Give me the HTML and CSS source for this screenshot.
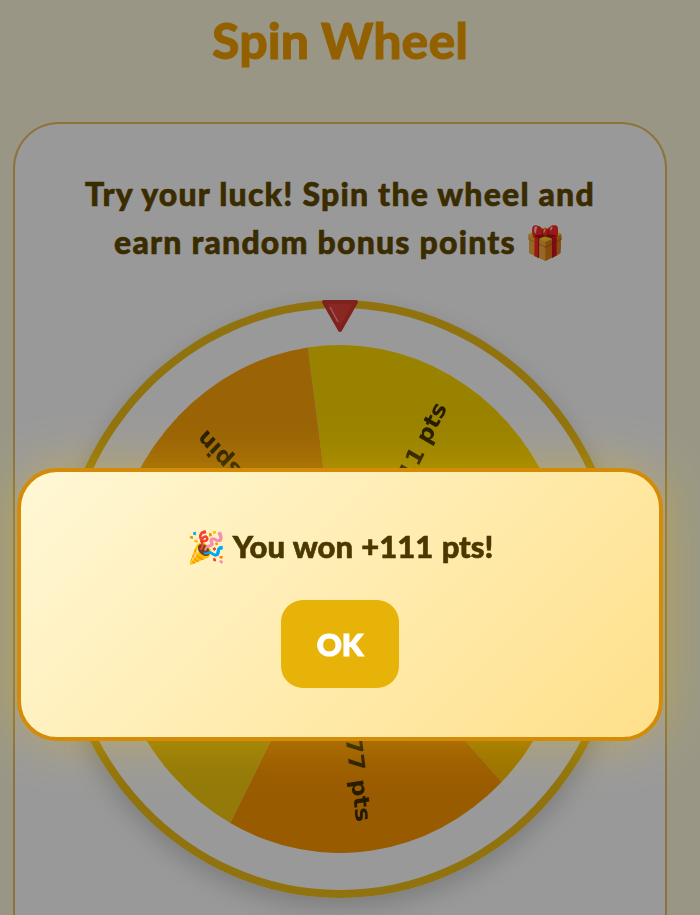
FILE: index.html
```html
<!DOCTYPE html>
<html lang="en">
<head>
    <meta charset="UTF-8">
    <meta name="viewport" content="width=device-width, initial-scale=1.0">
    <title>Spin Wheel</title>
    <link rel="stylesheet" href="styles.css">
</head>
<body>
    <div class="page">
        <h1 class="title">Spin Wheel</h1>
        <div class="card">
            <p class="intro">Try your luck! Spin the wheel and<br>earn random bonus points 🎁</p>
            <div class="wheel">
                <svg class="pointer" width="40" height="36" viewBox="0 0 40 36">
                    <polygon points="4,4 36,4 20,32" fill="#e8423a" stroke="#d43a32" stroke-width="4" stroke-linejoin="round"/>
                    <line x1="10" y1="9" x2="18" y2="24" stroke="#ff9d98" stroke-width="1.5"/>
                </svg>
                <svg class="disk" width="466" height="508" viewBox="0 0 508 508" preserveAspectRatio="none">
                    <g transform="rotate(-.6 254 254)">
                        <path d="M254 254 L221.7 2.1 A254 254 0 0 1 483.6 145.3 Z" fill="#ffd900"/>
                        <path d="M254 254 L483.6 145.3 A254 254 0 0 1 428.3 438.8 Z" fill="#ffbf00"/>
                        <path d="M254 254 L428.3 438.8 A254 254 0 0 1 132 476.8 Z" fill="#ff9800"/>
                        <path d="M254 254 L132 476.8 A254 254 0 0 1 4.4 206.8 Z" fill="#f5cc10"/>
                        <path d="M254 254 L4.4 206.8 A254 254 0 0 1 221.7 2.1 Z" fill="#ffa50a"/>
                        <g class="labels">
                            <text transform="translate(254 254) rotate(-61.3)" x="224" y="13">111 pts</text>
                            <text transform="translate(254 254) rotate(82.7)" x="224" y="13">77 pts</text>
                            <text transform="translate(254 254) rotate(226.7)" x="224" y="13">Free spin</text>
                        </g>
                    </g>
                </svg>
            </div>
        </div>
    </div>
    <div class="overlay">
        <div class="modal">
            <p class="won">🎉 You won +111 pts!</p>
            <button class="ok">OK</button>
        </div>
    </div>
</body>
</html>
```

FILE: styles.css
```css
*{
    box-sizing: border-box;
}
html, body{
    margin: 0;
    height: 915px;
    overflow: hidden;
}
body{
    background-color: #fffbdf;
    font-family: "Lato", "Noto Sans", sans-serif;
    font-weight: 900;
}
.page{
    width: 680px;
}
.title{
    margin: 0;
    text-align: center;
    font-size: 50px;
    line-height: 80px;
    font-weight: 900;
    color: #f5a000;
    -webkit-text-stroke: .8px #f5a000;
}
.card{
    margin: 42px 13px 0;
    padding-top: 46px;
    height: 793px;
    background-color: #fff;
    border: 2px solid #e8c060;
    border-bottom: 0;
    border-radius: 46px 46px 0 0;
}
.intro{
    margin: 0;
    text-align: center;
    font-size: 32px;
    line-height: 48px;
    letter-spacing: 1.2px;
    color: #634a00;
    -webkit-text-stroke: .6px #634a00;
}
.wheel{
    position: relative;
    width: 568px;
    height: 598px;
    margin: 34px auto 0;
    display: flex;
    align-items: center;
    justify-content: center;
    border: 8px solid #f0c018;
    border-radius: 50%;
    box-shadow: 0 10px 25px rgba(0,0,0,.18);
}
.pointer{
    position: absolute;
    top: -10px;
    left: 256px;
}
.disk{
    filter: blur(.6px);
}
.labels text{
    font-family: "DejaVu Sans", sans-serif;
    font-weight: 700;
    font-size: 24px;
    text-anchor: end;
    fill: #3d2e00;
}
.overlay{
    position: fixed;
    top: 0;
    left: 0;
    right: 0;
    bottom: 0;
    padding: 468px 0 0 17px;
    background-color: rgba(0,0,0,.4);
}
.modal{
    width: 646px;
    height: 273px;
    padding-top: 51px;
    text-align: center;
    background: linear-gradient(135deg, #fff8d6, #ffe08a);
    border: 4px solid #d48c08;
    border-radius: 40px;
    box-shadow: 0 0 50px rgba(255,200,0,.35);
}
.won{
    margin: 0;
    font-size: 31px;
    line-height: 46px;
    word-spacing: 1px;
    color: #4a3800;
    -webkit-text-stroke: .6px #4a3800;
}
.ok{
    display: block;
    width: 118px;
    height: 88px;
    margin: 31px auto 0;
    border: 0;
    border-radius: 22px;
    background-color: #e8b308;
    color: #fff;
    font-family: inherit;
    font-weight: 900;
    font-size: 31px;
    -webkit-text-stroke: 1.2px #fff;
}
```
